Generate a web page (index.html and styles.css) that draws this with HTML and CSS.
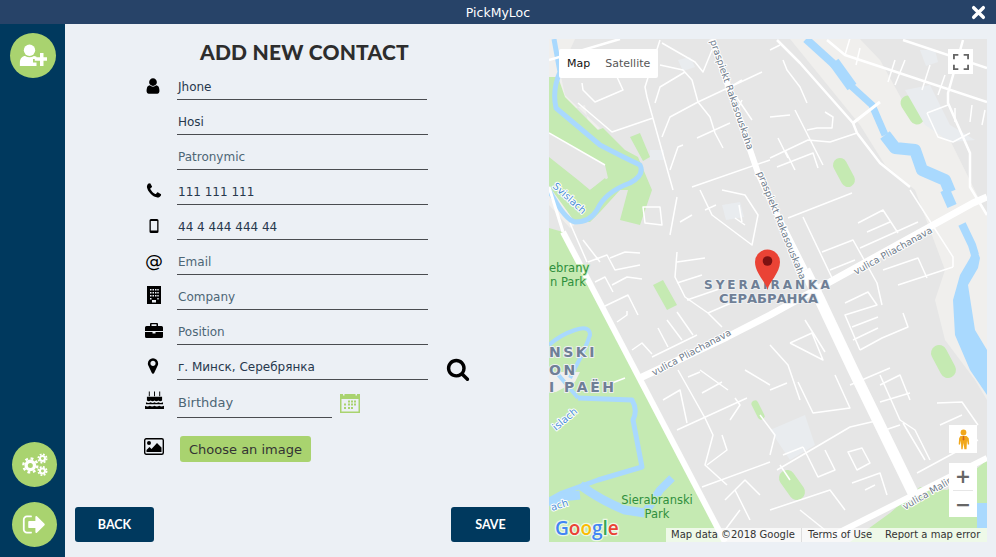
FILE: index.html
```html
<!DOCTYPE html>
<html lang="en">
  <head>
    <meta charset="UTF-8" />
    <title>PickMyLoc</title>
    <link rel="stylesheet" href="styles.css">
  </head>
  <body>
    <header class="titlebar">
      <span class="app-name">PickMyLoc</span>
      <svg class="close-icon" viewBox="0 0 14 14"><path d="M2.5 2.5 11.500 11.500M11.500 2.500 2.500 11.500" /></svg>
    </header>

    <div class="app">
      <!-- Left menu -->
      <nav class="sidebar">
        <div class="circle-btn first">
          <svg viewBox="0 0 32 26" class="icon-add">
            <circle cx="12" cy="7" r="6.500" />
            <path d="M1 25v-4c0-5 3-7.500 6-7.500 3 2 7 2 10 0 1 0 2 .3 3 .8v2.700h-4v4h4v4z" />
            <path d="M24 10h4v5h4v4h-4v6h-4v-6h-6v-4h6z" />
          </svg>
        </div>
        <div class="sidebar-bottom">
          <div class="circle-btn">
            <svg viewBox="0 0 30 24" class="icon-gears">
              <circle cx="10" cy="13" r="4.500" class="ring" />
              <circle cx="10" cy="13" r="7.500" class="teeth" />
              <circle cx="23" cy="5.500" r="2.700" class="ring small" />
              <circle cx="23" cy="5.500" r="4.500" class="teeth small" />
              <circle cx="23" cy="19" r="2.700" class="ring small" />
              <circle cx="23" cy="19" r="4.500" class="teeth small" />
            </svg>
          </div>
          <div class="circle-btn">
            <svg viewBox="0 0 1792 1792" class="icon-exit">
              <path d="M704 1440q0 4 1 20t.5 26.500-3 23.500-10 19.500-20.500 6.500h-320q-119 0-203.500-84.500t-84.500-203.500v-704q0-119 84.500-203.500t203.500-84.500h320q13 0 22.500 9.500t9.500 22.500q0 4 1 20t.5 26.500-3 23.500-10 19.500-20.500 6.500h-320q-66 0-113 47t-47 113v704q0 66 47 113t113 47h312l11.500 1 11.500 3 8 5.500 7 9 2 13.500zm928-544q0 26-19 45l-544 544q-19 19-45 19t-45-19-19-45v-288h-448q-26 0-45-19t-19-45v-384q0-26 19-45t45-19h448v-288q0-26 19-45t45-19 45 19l544 544q19 19 19 45z" />
            </svg>
          </div>
        </div>
      </nav>

      <main class="content">
        <section class="form-col">
          <h1 class="form-title">ADD NEW CONTACT</h1>

          <div class="row">
            <span class="row-icon"><svg viewBox="0 0 1792 1792" class="ico user-ico"><path d="M1536 1399q0 109-62.500 187t-150.500 78h-854q-88 0-150.500-78t-62.500-187q0-85 8.500-160.500t31.500-152 58.500-131 94-89 134.500-34.500q131 128 313 128t313-128q76 0 134.500 34.500t94 89 58.500 131 31.500 152 8.500 160.500zm-256-887q0 159-112.500 271.500t-271.500 112.500-271.500-112.500-112.500-271.500 112.500-271.500 271.500-112.500 271.500 112.500 112.500 271.500z" /></svg></span>
            <div class="field first-field">Jhone</div>
          </div>
          <div class="row">
            <span class="row-icon"></span>
            <div class="field">Hosi</div>
          </div>
          <div class="row">
            <span class="row-icon"></span>
            <div class="field empty">Patronymic</div>
          </div>
          <div class="row">
            <span class="row-icon"><svg viewBox="0 0 1792 1792" class="ico"><path d="M1600 1240q0 27-10 70.500t-21 68.500q-21 50-122 106-94 51-186 51-27 0-53-3.500t-57.500-12.500-47-14.500-55.500-20.500-49-18q-98-35-175-83-127-79-264-216t-216-264q-48-77-83-175-3-9-18-49t-20.500-55.500-14.500-47-12.500-57.500-3.500-53q0-92 51-186 56-101 106-122 25-11 68.500-21t70.500-10q14 0 21 3 18 6 53 76 11 19 30 54t35 63.500 31 53.500q3 4 17.500 25t21.500 35.500 7 28.500q0 20-28.500 50t-62 55-62 53-28.500 46q0 9 5 22.500t8.500 20.500 14 24 11.500 19q76 137 174 235t235 174q2 1 19 11.500t24 14 20.500 8.500 22.500 5q18 0 46-28.500t53-62 55-62 50-28.500q14 0 28.500 7t35.500 21.500 25 17.500q25 15 53.500 31t63.500 35 54 30q70 35 76 53 3 7 3 21z" /></svg></span>
            <div class="field">111 111 111</div>
          </div>
          <div class="row">
            <span class="row-icon"><svg viewBox="0 0 10 16" class="ico-mobile"><path fill-rule="evenodd" d="M2 1h6a1.500 1.500 0 0 1 1.500 1.500v11A1.500 1.500 0 0 1 8 15H2a1.500 1.500 0 0 1-1.500-1.500v-11A1.500 1.500 0 0 1 2 1zM1.800 3v9.500h6.400V3z" /></svg></span>
            <div class="field">44 4 444 444 44</div>
          </div>
          <div class="row">
            <span class="row-icon at-icon">@</span>
            <div class="field empty">Email</div>
          </div>
          <div class="row">
            <span class="row-icon">
              <svg viewBox="0 0 14 18" class="ico-building">
                <path fill-rule="evenodd" d="M0 0h14v18H0zM3 3v1.500h1.500V3zm2.500 0v1.500H7V3zM8 3v1.500h1.500V3zm2.300 0v1.500h1.400V3zM3 6v1.500h1.500V6zm2.500 0v1.500H7V6zM8 6v1.500h1.500V6zm2.300 0v1.500h1.400V6zM3 9v1.500h1.500V9zm2.500 0v1.500H7V9zM8 9v1.500h1.500V9zm2.300 0v1.500h1.400V9zM3 12v1.500h1.500V12zm7.300 0v1.500h1.400V12zM5 14v2.500h4V14z" />
              </svg>
            </span>
            <div class="field empty">Company</div>
          </div>
          <div class="row">
            <span class="row-icon">
              <svg viewBox="0 0 18 15" class="ico-case">
                <path fill-rule="evenodd" d="M6 0h6a1 1 0 0 1 1 1v2h3.500A1.500 1.500 0 0 1 18 4.500V8H0V4.500A1.500 1.500 0 0 1 1.500 3H5V1a1 1 0 0 1 1-1zm.5 1.300V3h5V1.300z" />
                <path d="M0 9h7.500v1.500h3V9H18v4.500a1.500 1.500 0 0 1-1.500 1.500h-15A1.500 1.500 0 0 1 0 13.500z" />
              </svg>
            </span>
            <div class="field empty">Position</div>
          </div>
          <div class="row">
            <span class="row-icon"><svg viewBox="0 0 1792 1792" class="ico user-ico"><path d="M1152 640q0-106-75-181t-181-75-181 75-75 181 75 181 181 75 181-75 75-181zm256 0q0 109-33 179l-364 774q-16 33-47.500 52t-67.500 19-67.500-19-46.500-52l-365-774q-33-70-33-179 0-212 150-362t362-150 362 150 150 362z" /></svg></span>
            <div class="field">г. Минск, Серебрянка</div>
            <svg viewBox="0 0 1792 1792" class="ico-search"><path d="M1216 832q0-185-131.500-316.500t-316.500-131.500-316.500 131.500-131.500 316.500 131.500 316.500 316.500 131.500 316.500-131.500 131.500-316.500zm512 832q0 52-38 90t-90 38q-54 0-90-38l-343-342q-179 124-399 124-143 0-273.500-55.500t-225-150-150-225-55.500-273.500 55.500-273.500 150-225 225-150 273.500-55.500 273.500 55.500 225 150 150 225 55.500 273.500q0 220-124 399l343 343q37 37 37 90z" /></svg>
          </div>
          <div class="row birthday-row">
            <span class="row-icon">
              <svg viewBox="0 0 20 19" class="ico-cake">
                <path d="M4 0.500h1v5H4zM9.500 0.500h1v5h-1zM15 0.500h1v5h-1z" />
                <path d="M2 6h16v4c-1.300 1-2.700 1-4 0-1.300 1-2.700 1-4 0-1.300 1-2.700 1-4 0-1.300 1-2.700 1-4 0z" />
                <path d="M1 12c1.700 1 3.300 1 5 0 1.300 1 2.700 1 4 0 1.300 1 2.700 1 4 0 1.700 1 3.300 1 5 0v2H1z" />
                <path d="M0 15.500c2 1 3.300 1 5 0 1.700 1 3.300 1 5 0 1.700 1 3.300 1 5 0 1.700 1 3 1 5 0V19H0z" />
              </svg>
            </span>
            <div class="field short empty">Birthday</div>
            <svg viewBox="0 0 20 20" class="ico-calendar">
              <path fill-rule="evenodd" d="M0 1h3v1.500h1.500V1h11v1.500H17V1h3v19H0zM1.500 6v12.500h17V6z" />
              <path d="M8 7.500h2v2H8zM11 7.500h2v2h-2zM14 7.500h2v2h-2zM4 10.500h2v2H4zM8 10.500h2v2H8zM11 10.500h2v2h-2zM14 10.500h2v2h-2zM4 14h2v2H4zM8 14h2v2H8zM11 14h2v2h-2z" />
            </svg>
          </div>
          <div class="image-row">
            <span class="row-icon">
              <svg viewBox="0 0 20 17" class="ico-image">
                <rect x="0.700" y="0.700" width="18.600" height="15.600" rx="1.500" class="frame" />
                <circle cx="5" cy="5" r="2" />
                <path d="M2.500 14v-2l3-3 2 2 5.500-6 4.500 4.500V14z" />
              </svg>
            </span>
            <button class="choose-btn">Choose an image</button>
          </div>

          <div class="form-actions">
            <button class="dark-btn">BACK</button>
            <button class="dark-btn">SAVE</button>
          </div>
        </section>

        <!-- Map -->
        <section class="map">
          <svg class="map-canvas" viewBox="549 39 438 503">
            <rect x="549" y="39" width="438" height="503" class="land" />

            <!-- beige ground -->
            <path class="beige" d="M790 39 860 125 885 165 915 190 945 270 935 300 945 340 975 380 987 400V215L950 140 905 105 880 60 860 39z" />
            <path class="beige" d="M549 39H575L560 72 565 95 600 128 590 135 585 105 570 110 549 115z" />
            <path class="beige" d="M549 133 605 165 610 185 595 195 590 215 570 228 549 205z" />

            <!-- parks -->
            <path class="park" d="M549 77H558L565 97 598 130 603 128 625 150 638 157 652 190 640 225 620 220 628 190 620 190 600 212 590 222 575 222 549 183z" />
            <path class="grey-fill" d="M549 133 605 165 608 178 590 190 582 205 549 165z" />
            <path class="park" d="M549 157 578 180 590 190 605 178 615 195 590 218 575 222 549 186z" />
            <path class="park" d="M549 228 563 232 725 542H549z" />
            <path class="beige" d="M549 372H580L575 382 556 392 549 392z" />
            <path class="park" d="M630 137 640 133 650 157 643 161zM653 285 663 280 677 305 667 310z" />
            <path class="park" d="M890 513 920 487 947 490 975 470 987 460V542H850z" />
            <line class="pill" x1="908" y1="103" x2="917" y2="117" stroke-width="15" />
            <line class="pill" x1="840" y1="165" x2="848" y2="180" stroke-width="14" />
            <line class="pill" x1="939" y1="353" x2="948" y2="370" stroke-width="16" />
            <line class="pill" x1="787" y1="478" x2="797" y2="492" stroke-width="16" />
            <line class="pill" x1="755" y1="404" x2="761" y2="416" stroke-width="7" />

            <!-- blue-grey blocks -->
            <path class="block" d="M905 90 930 85 950 125 975 140 950 142 925 125zM770 430 805 415 815 445 790 460zM650 150h14v10h-14zM920 50h15l3 12-12 4zM678 60l12-3 5 10-12 4zM722 205l18-3 4 15-18 3z" />

            <!-- water: left river -->
            <path class="river w5" d="M554 39 560 72Q552 90 556 108L600 145Q625 158 640 165 645 175 630 183 605 192 597 210 590 222 575 222 565 220 549 190" />
            <path class="river w4" d="M549 345Q560 335 575 330 590 325 590 335 585 350 575 368L570 378M556 372 578 398" />
            <path class="river w5" d="M578 398 632 400Q638 410 633 420L642 467 598 480 562 493 549 500" />
            <path class="river w9" d="M549 505 562 497 580 495M580 485Q600 500 625 510L645 513" />
            <path class="river w8" d="M645 513 660 490 672 478" />

            <!-- water: right river -->
            <path class="river w8" d="M806 39 838 68" />
            <path class="river w11" d="M834 62 852 87" />
            <path class="river w7" d="M850 85 872 105 885 135" />
            <path class="river w12" d="M885 135 895 148 915 150 922 170 945 180 950 192" />
            <path class="river w10" d="M945 190 952 206" />
            <path class="river w8" d="M962 224 972 245 975 255" />
            <path class="water" d="M975 245 980 258 978 268 968 285 975 330 987 350V395L970 370 955 335 953 300 960 275 970 258zM977 503H987V528H977z" />

            <!-- thin streets -->
            <path class="street" d="M660 40 645 87 647 97 673 190M662 43 695 62 703 72 712 50M582 83 583 90 595 102 623 90 617 77M578 103 612 132 653 118M549 133 605 165M660 65 683 70 692 80 698 102 710 117 715 133 723 148M655 103 660 87 685 72M662 137 670 117 698 102 762 72M697 138 730 123M670 170 678 147 683 145M692 187 770 160M725 90 742 80M735 95 752 120M742 100 735 115" />
            <path class="street" d="M783 60 787 70 800 87 807 103M770 117 790 115M795 110 823 165M770 158 808 140 830 142 857 133M807 130 817 128 832 128 833 117 825 112M777 167 813 153 818 168M927 113 948 105M927 113 938 137 953 142 970 133M770 50 780 45M845 55 850 38M860 48 856 65M895 60 888 82M905 60 895 85M930 65 922 90M945 75 938 95M955 108 955 122M972 105 970 122M985 110 982 125M785 150 795 170M778 138 788 158" />
            <path class="street" d="M788 218 852 193M803 217 833 280M822 252 853 240 877 283 882 305M830 270 855 260M860 248 918 222M858 223 883 210 898 233M867 232 890 222M910 190 953 257 953 267M883 270 918 258 927 278M898 285 953 267M845 303 868 292 877 305 845 315 860 350M852 327 878 317M853 340 878 328M903 313 908 327 882 338 860 350M790 343 812 333 823 360 790 343M805 320 825 352M770 345 788 365 800 400" />
            <path class="street" d="M677 197 670 235M643 207 645 223 662 225 660 207zM677 252 675 277 685 297 708 313 722 327M677 262 705 258M677 283 702 275M687 300 722 288M708 313 738 300M588 262 607 255 615 270 640 265M610 258 625 252 640 253M595 282 605 277 613 292M612 285 627 277 642 279M603 307 628 295 638 315M617 322 627 315 627 311M632 350 642 343 652 354M652 357 697 335M658 328 668 347M667 320 682 340M677 312 693 335M583 240 600 262M570 223 587 262M700 190 712 215 752 245 758 215 745 195 722 190M680 222 692 215M705 210 716 205M735 218 745 225M739 205 742 222" />
            <path class="street" d="M677 430 747 398M663 400 680 390 687 423M678 370 705 418 713 435 705 465 727 485M707 465 727 450 722 435M702 487 770 462M688 377 700 372M702 393 722 382M730 420 740 405 735 398M612 383 625 378M745 370 770 385M760 415 775 435 770 455M725 500 745 480 760 495M735 490 750 520M740 510 725 530M700 370 728 390" />
            <path class="street" d="M777 470 850 427 880 420M770 390 787 383M798 382 813 413 850 408 835 375M803 447 818 477 835 470 825 450M783 455 803 447M848 452 862 448 870 463 857 470zM852 483 880 473 887 495M865 490 875 485M880 402 910 393M880 375 900 420 915 430 930 460M917 473 978 440M903 423 925 460M937 403 962 402 978 425M940 425 962 415M770 510 830 490 845 510M800 510 825 530M780 465 790 480M850 385 890 368M880 385 900 375 910 400M885 430 900 425" />

            <!-- wider roads -->
            <path class="road-mid" d="M549 60 620 39M777 40 800 63 853 123 857 133 880 163 910 187M827 40 845 55 987 102M903 40 987 68M963 40 948 93 948 103 970 153 970 187 987 215" />
            <path class="road-thin" d="M549 187 563 232M853 123 880 102" />
            <path class="road-diag" d="M563 232 725 542" />
            <path class="road-main" d="M712 39 758 173 775 210 805 270" />
            <path class="road-wide" d="M805 270 820 300 853 370 913 493" />
            <path class="road-cross" d="M640 378 727 337 770 315 973 203 987 197" />
            <path class="road-diag" d="M830 537 987 458" />

            <!-- labels -->
            <text class="road-label" transform="translate(710 41) rotate(71)">praspiekt Rakasouskaha</text>
            <text class="road-label" transform="translate(757 173) rotate(68)">praspiekt Rakasouskaha</text>
            <text class="road-label" transform="translate(654 376) rotate(-28)">vulica Pliachanava</text>
            <text class="road-label" transform="translate(856 275) rotate(-29)">vulica Pliachanava</text>
            <text class="road-label" transform="translate(905 510) rotate(-30)">vulica Malin</text>
            <text class="water-label" transform="translate(552 187) rotate(42)">Svislach</text>
            <text class="water-label" transform="translate(556 431) rotate(-40)">islach</text>
            <text class="water-label" transform="translate(552 511) rotate(-18)">ach</text>
            <text class="park-label" x="549" y="272">ebrany</text>
            <text class="park-label" x="550" y="286">n Park</text>
            <text class="park-label center" x="657" y="504">Sierabranski</text>
            <text class="park-label center" x="657" y="518">Park</text>
            <text class="place-label" x="549" y="357">NSKI</text>
            <text class="place-label" x="549" y="375">ON</text>
            <text class="place-label" x="549" y="392">I РАЁН</text>
            <text class="place-label spaced" x="704" y="289">SYERAIRANKA</text>
            <text class="place-label cyr" x="719" y="303">СЕРАБРАНКА</text>

            <!-- marker -->
            <path class="pin" d="M767.500 290C766 282 755 273 755 262A12.500 12.500 0 0 1 780 262C780 273 769 282 767.500 290z" />
            <circle cx="767.500" cy="261" r="4.800" class="pin-dot" />

            <text class="google" x="555" y="535"><tspan class="g-blue">G</tspan><tspan class="g-red">o</tspan><tspan class="g-yellow">o</tspan><tspan class="g-blue">g</tspan><tspan class="g-green">l</tspan><tspan class="g-red">e</tspan></text>
          </svg>

          <div class="map-type">
            <span class="type-active">Map</span>
            <span class="type-other">Satellite</span>
          </div>
          <div class="fullscreen">
            <svg viewBox="0 0 18 18"><path d="M1 6V1h5M12 1h5v5M17 12v5h-5M6 17H1v-5" /></svg>
          </div>
          <div class="pegman">
            <svg viewBox="0 0 14 24">
              <circle cx="7" cy="4" r="3.300" class="peg-body" />
              <path class="peg-body" d="M3.500 8h7l2.500 2.500.5 7-1.500.5-1-5-.5 10H8l-1-7-1 7H4.500L4 13l-1 5-1.500-.5.5-7z" />
              <path class="peg-tie" d="M6.300 8h1.400l.3 4-1 1.500-1-1.500z" />
            </svg>
          </div>
          <div class="zoom-box">
            <span class="zoom-btn">+</span>
            <span class="zoom-sep"></span>
            <span class="zoom-btn">−</span>
          </div>
          <div class="attribution">
            <span class="attr-data">Map data ©2018 Google</span>
            <span class="attr-terms">Terms of Use</span>
            <span class="attr-report">Report a map error</span>
          </div>
        </section>
      </main>
    </div>
  </body>
</html>
```
FILE: styles.css
```css
/* General styling */
html,
body {
  height: 100%;
}

body {
  margin: 0;
  display: flex;
  flex-direction: column;
  overflow: hidden;
  font-family: "DejaVu Sans", sans-serif;
  background-color: #ecf0f5;
}

svg {
  display: block;
}

/* Title bar */
.titlebar {
  height: 24px;
  flex: none;
  display: flex;
  align-items: center;
  justify-content: center;
  position: relative;
  background-color: #274368;
  color: #fff;
  font-size: 12.500px;
}

.close-icon {
  position: absolute;
  right: 10px;
  top: 5px;
  width: 15px;
  height: 15px;
  fill: none;
  stroke: #fff;
  stroke-width: 3.200;
  stroke-linecap: round;
}

.app {
  flex: 1;
  display: flex;
  min-height: 0;
}

/* Sidebar */
.sidebar {
  width: 65px;
  flex: none;
  display: flex;
  flex-direction: column;
  justify-content: space-between;
  box-sizing: border-box;
  padding: 9px 0 10px;
  background-color: #00395e;
}

.sidebar-bottom {
  display: flex;
  flex-direction: column;
  gap: 15px;
  padding-left: 12px;
}

.circle-btn {
  width: 45px;
  height: 45px;
  border-radius: 50%;
  background-color: #a9d36f;
  display: flex;
  align-items: center;
  justify-content: center;
}

.circle-btn.first {
  width: 46px;
  margin-left: 10px;
}

.icon-add {
  width: 28px;
  height: 23px;
  fill: #fff;
}

.icon-gears {
  width: 28px;
  height: 23px;
  fill: none;
  stroke: #fff;
}

.icon-gears .ring {
  stroke-width: 3.600;
}

.icon-gears .teeth {
  stroke-width: 2.500;
  stroke-dasharray: 3 2.900;
}

.icon-gears .ring.small {
  stroke-width: 2.200;
}

.icon-gears .teeth.small {
  stroke-width: 1.800;
  stroke-dasharray: 2 1.530;
}

.icon-exit {
  width: 25px;
  height: 25px;
  fill: #fff;
}

/* Main content */
.content {
  flex: 1;
  display: flex;
  padding: 15px 9px 15px 0;
  min-width: 0;
}

.form-col {
  width: 484px;
  flex: none;
  display: flex;
  flex-direction: column;
  box-sizing: border-box;
  padding-left: 75px;
}

.form-title {
  margin: 0 0 0 60px;
  height: 26px;
  line-height: 26px;
  font-family: Lato, sans-serif;
  font-size: 21px;
  font-weight: 900;
  letter-spacing: 0.200px;
  color: #2d2d2d;
  white-space: nowrap;
}

.row {
  display: flex;
  align-items: flex-end;
  height: 35px;
}

.row-icon {
  width: 24px;
  height: 25px;
  margin: 0 12px 0 2px;
  flex: none;
  display: flex;
  justify-content: center;
}

.ico {
  width: 18px;
  height: 18px;
  margin-top: 2px;
}

.ico.user-ico {
  margin-left: -3px;
}

.ico-mobile {
  width: 10px;
  height: 16px;
  margin-top: 3px;
}

.at-icon {
  font-size: 18px;
  line-height: 22px;
  color: #000;
}

.ico-building {
  width: 14px;
  height: 18px;
  margin-top: 1px;
}

.ico-case {
  width: 18px;
  height: 15px;
  margin-top: 3px;
}

.field {
  width: 251px;
  height: 25px;
  margin-left: -1px;
  box-sizing: border-box;
  padding-left: 1px;
  line-height: 25px;
  font-size: 12px;
  color: #27384d;
  border-bottom: 1.500px solid #4a4c50;
  white-space: nowrap;
}

.field.first-field {
  width: 250px;
}

.field.empty {
  color: #4d6675;
}

.ico-search {
  width: 24px;
  height: 24px;
  margin: 0 0 -1px 18px;
}

.birthday-row {
  height: 38px;
}

.birthday-row .row-icon {
  height: 27px;
}

.field.short {
  width: 155px;
  height: 27px;
  line-height: 23px;
  font-size: 13px;
}

.ico-calendar {
  width: 20px;
  height: 20px;
  margin: 0 0 5px 8px;
  fill: #a9d36f;
}

.ico-cake {
  width: 19px;
  height: 18px;
}

.image-row {
  display: flex;
  align-items: flex-start;
  margin-top: 18px;
  height: 26px;
}

.image-row .row-icon {
  height: auto;
}

.ico-image {
  width: 20px;
  height: 17px;
  margin-top: 2px;
}

.ico-image .frame {
  fill: none;
  stroke: #000;
  stroke-width: 1.400;
}

.choose-btn {
  width: 131px;
  height: 26px;
  margin-left: 2px;
  padding: 0;
  border: none;
  border-radius: 3px;
  background-color: #a9d36f;
  color: #333;
  font-family: "DejaVu Sans", sans-serif;
  font-size: 13px;
}

.form-actions {
  margin-top: auto;
  display: flex;
  justify-content: space-between;
  margin-left: -65px;
  margin-right: 19px;
}

.dark-btn {
  width: 79px;
  height: 35px;
  padding: 0;
  border: none;
  border-radius: 3px;
  background-color: #00395e;
  color: #fff;
  font-family: Lato, sans-serif;
  font-size: 12.500px;
  font-weight: 700;
}

/* Map */
.map {
  flex: 1;
  position: relative;
  overflow: hidden;
}

.map-canvas {
  width: 100%;
  height: 100%;
}

.land { fill: #e6e6e6; }
.beige { fill: #f0efed; }
.grey-fill { fill: #e6e6e6; }
.park { fill: #c5eab2; }
.block { fill: #e9ecef; }
.water { fill: #a9d9fe; }

.pill {
  stroke: #c5eab2;
  stroke-linecap: round;
}

.river {
  fill: none;
  stroke: #a9d9fe;
  stroke-linejoin: round;
}

.w4 { stroke-width: 4; }
.w5 { stroke-width: 5; }
.w7 { stroke-width: 7; }
.w8 { stroke-width: 8; }
.w9 { stroke-width: 9; }
.w10 { stroke-width: 10; }
.w11 { stroke-width: 11; }
.w12 { stroke-width: 12; }

.street,
.road-thin,
.road-mid,
.road-diag,
.road-main,
.road-wide,
.road-cross {
  fill: none;
  stroke: #fff;
  stroke-linejoin: round;
}

.street { stroke-width: 1.500; }
.road-thin { stroke-width: 3; }
.road-mid { stroke-width: 2.500; }
.road-diag { stroke-width: 6; }
.road-main { stroke-width: 6; }
.road-wide { stroke-width: 11; }
.road-cross { stroke-width: 7; }

.road-label,
.water-label,
.park-label,
.place-label {
  font-family: "DejaVu Sans", sans-serif;
  paint-order: stroke;
  stroke: #fff;
  stroke-width: 2px;
  stroke-linejoin: round;
}

.road-label {
  font-size: 9.500px;
  fill: #6f7c8b;
}

.water-label {
  font-size: 10px;
  fill: #4c8fd8;
}

.park-label {
  font-size: 11.500px;
  fill: #2f8f3d;
  stroke: #c5eab2;
}

.park-label.center {
  text-anchor: middle;
}

.place-label {
  font-size: 14px;
  font-weight: 700;
  letter-spacing: 2.500px;
  fill: #6f7f96;
  stroke: #eef0f2;
}

.place-label.spaced {
  font-size: 12px;
  letter-spacing: 3px;
}

.place-label.cyr {
  font-size: 13px;
  letter-spacing: 0;
}

.pin { fill: #ea4335; }
.pin-dot { fill: #7c1212; }

.google {
  font-family: "Open Sans", sans-serif;
  font-size: 19px;
  font-weight: 600;
  paint-order: stroke;
  stroke: #fff;
  stroke-opacity: 0.700;
  stroke-width: 2.500px;
}

.g-blue { fill: #4285f4; }
.g-red { fill: #ea4335; }
.g-yellow { fill: #fbbc05; }
.g-green { fill: #34a853; }

/* Map controls */
.map-type {
  position: absolute;
  left: 10px;
  top: 10px;
  height: 29px;
  display: flex;
  align-items: center;
  background-color: #fff;
  border-radius: 2px;
  font-size: 11px;
}

.type-active {
  padding: 0 8px;
  color: #111;
}

.type-other {
  padding: 0 8px 0 7px;
  color: #565656;
}

.fullscreen {
  position: absolute;
  right: 14px;
  top: 10px;
  width: 25px;
  height: 25px;
  background-color: #fff;
  display: flex;
  align-items: center;
  justify-content: center;
}

.fullscreen svg {
  width: 16px;
  height: 16px;
  fill: none;
  stroke: #666;
  stroke-width: 2.200;
}

.pegman {
  position: absolute;
  right: 10px;
  top: 386px;
  width: 28px;
  height: 28px;
  background-color: #fff;
  display: flex;
  align-items: center;
  justify-content: center;
}

.pegman svg {
  width: 13px;
  height: 21px;
}

.peg-body { fill: #f1a81c; }
.peg-tie { fill: #d9651a; }

.zoom-box {
  position: absolute;
  right: 10px;
  top: 424px;
  width: 28px;
  height: 54px;
  background-color: #fff;
  display: flex;
  flex-direction: column;
  align-items: center;
}

.zoom-btn {
  height: 26.500px;
  line-height: 26px;
  font-size: 19px;
  font-weight: 700;
  color: #666;
}

.zoom-sep {
  width: 20px;
  height: 1px;
  background-color: #e6e6e6;
}

.attribution {
  position: absolute;
  right: 0;
  bottom: 0;
  width: 321px;
  height: 14px;
  line-height: 14px;
  display: flex;
  background-color: rgba(255, 255, 255, 0.7);
  font-size: 10px;
  color: #333;
  white-space: nowrap;
}

.attr-data {
  width: 135px;
  padding-left: 5px;
  box-sizing: border-box;
  flex: none;
}

.attr-terms {
  width: 84px;
  padding-left: 6px;
  box-sizing: border-box;
  flex: none;
  border-left: 1px solid #ddd;
}

.attr-report {
  flex: none;
}
```
